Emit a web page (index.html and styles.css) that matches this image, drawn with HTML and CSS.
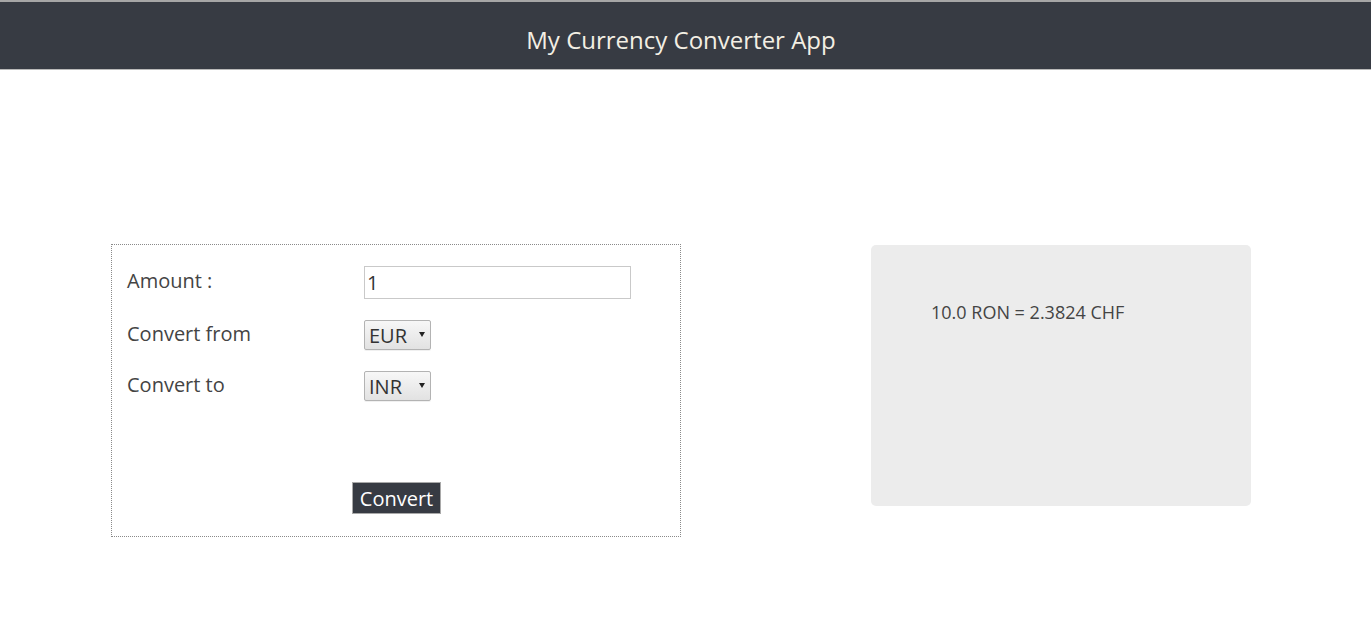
FILE: index.html
```html
<!DOCTYPE html>
<html lang="en">
<head>
<meta charset="utf-8">
<title>My Currency Converter App</title>
<link rel="stylesheet" href="styles.css">
</head>
<body>
<header class="topbar">
  <h1 class="title">My Currency Converter App</h1>
</header>
<main class="content">
  <form class="converter">
    <div class="fields">
      <label class="label" for="amount">Amount :</label>
      <input class="amount" id="amount" type="text" value="1">
      <label class="label" for="from">Convert from</label>
      <span class="select-wrap">
        <select class="select" id="from">
          <option>EUR</option>
          <option>USD</option>
          <option>RON</option>
        </select>
      </span>
      <label class="label" for="to">Convert to</label>
      <span class="select-wrap">
        <select class="select" id="to">
          <option>INR</option>
          <option>CHF</option>
          <option>GBP</option>
        </select>
      </span>
    </div>
    <div class="actions">
      <button class="convert" type="button">Convert</button>
    </div>
  </form>
  <section class="result">
    <p class="result-text">10.0 RON = 2.3824 CHF</p>
  </section>
</main>
</body>
</html>
```
FILE: styles.css
```css
* { box-sizing: border-box; }

body {
  margin: 0;
  font-family: "Open Sans", "Noto Sans", "Liberation Sans", sans-serif;
  color: #444;
  background: #fff;
}

.topbar {
  height: 70px;
  background: #373b43;
  border-top: 2px solid #a6a6a6;
  border-bottom: 1px solid #b9b9b9;
  display: flex;
  align-items: center;
  justify-content: center;
}

.title {
  margin: 0;
  font-size: 24px;
  font-weight: 400;
  color: #f3efe4;
  padding: 8px 9px 0 0;
}

.content {
  display: flex;
  align-items: flex-start;
  gap: 190px;
  padding: 174px 0 0 111px;
}

.converter {
  width: 570px;
  border: 1px dotted #8a8a8a;
  padding: 21px 15px 22px 15px;
  margin: 0;
}

.fields {
  display: grid;
  grid-template-columns: 237px auto;
  grid-template-rows: 33px 30px 30px;
  row-gap: 21px;
  align-items: center;
  justify-items: start;
}

.label {
  font-size: 20px;
  color: #444;
  margin-top: -4px;
}

.amount {
  width: 267px;
  height: 33px;
  border: 1px solid #c9c9c9;
  padding: 0 2px;
  font-family: inherit;
  font-size: 20px;
  color: #333;
  background: #fff;
  outline: none;
}

.select-wrap {
  position: relative;
  display: inline-block;
}

.select-wrap::after {
  content: "";
  position: absolute;
  right: 6px;
  top: 12px;
  border-left: 3px solid transparent;
  border-right: 3px solid transparent;
  border-top: 5px solid #222;
  pointer-events: none;
}

.select {
  -webkit-appearance: none;
  appearance: none;
  width: 67px;
  height: 30px;
  border: 1px solid #b3b3b3;
  border-radius: 2px;
  background: linear-gradient(#f7f7f7, #e2e2e2);
  font-family: inherit;
  font-size: 20px;
  color: #333;
  padding: 0 0 0 4px;
  box-shadow: 0 1px 0 rgba(0,0,0,0.06);
}

.actions {
  display: flex;
  justify-content: center;
  margin-top: 81px;
}

.convert {
  width: 89px;
  height: 32px;
  background: #373b43;
  color: #fff;
  border: 1px solid #a9a9a9;
  font-family: inherit;
  font-size: 20px;
  padding: 0;
  margin-left: 1px;
  cursor: pointer;
}

.result {
  width: 380px;
  height: 261px;
  background: #ececec;
  border-radius: 5px;
  margin-top: 1px;
  padding: 55px 60px;
}

.result-text {
  margin: 0;
  font-size: 18px;
  line-height: 24px;
  color: #444;
}
```
